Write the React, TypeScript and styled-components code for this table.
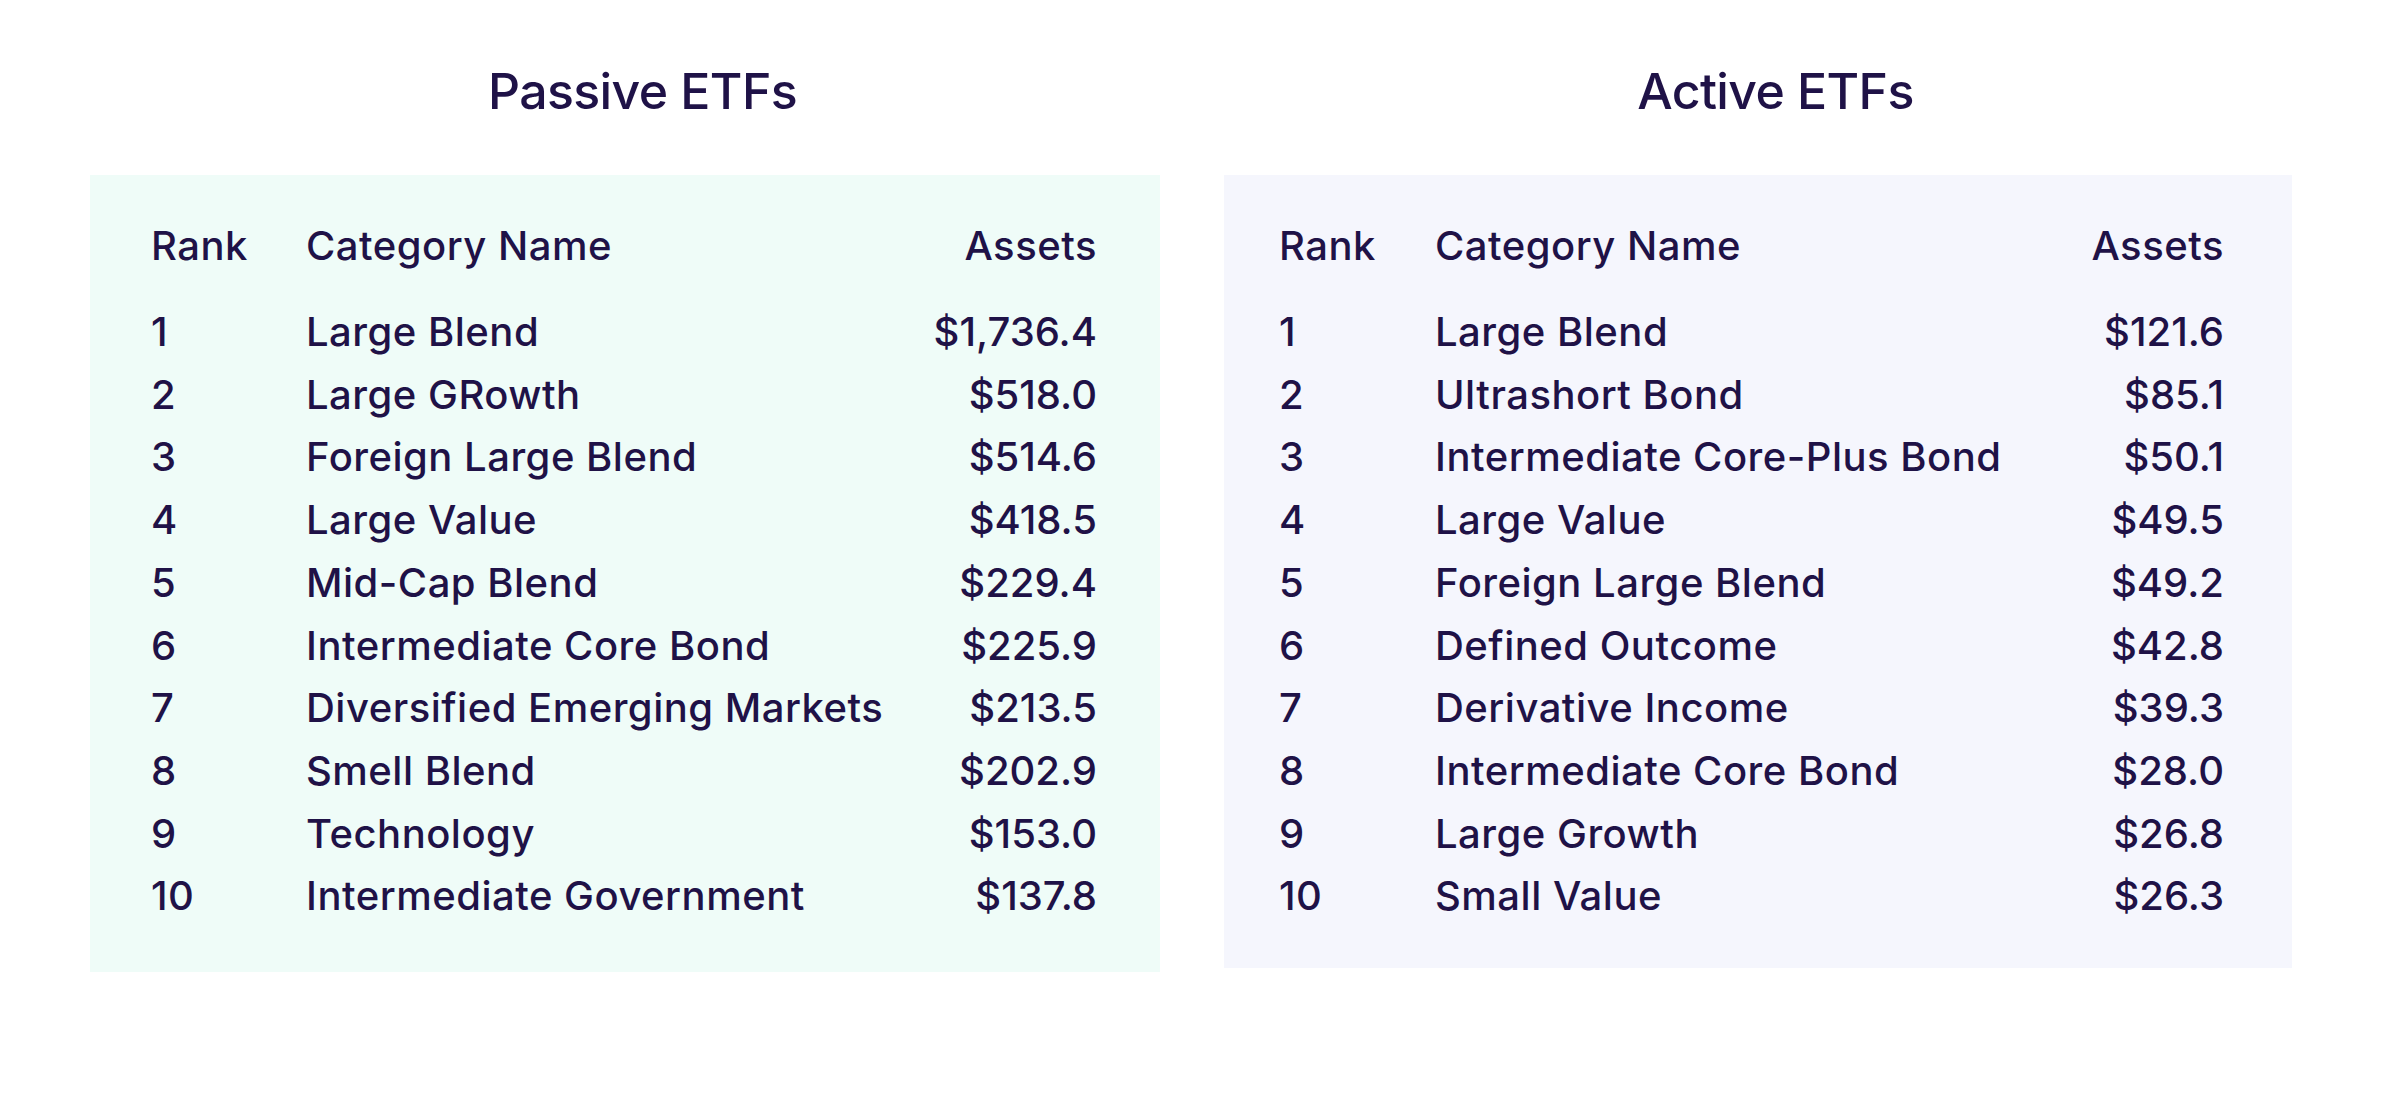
import React from "react";
import styled, { createGlobalStyle } from "styled-components";

type Row = { rank: number; name: string; assets: string };

const passive: Row[] = [
  { rank: 1, name: "Large Blend", assets: "$1,736.4" },
  { rank: 2, name: "Large GRowth", assets: "$518.0" },
  { rank: 3, name: "Foreign Large Blend", assets: "$514.6" },
  { rank: 4, name: "Large Value", assets: "$418.5" },
  { rank: 5, name: "Mid-Cap Blend", assets: "$229.4" },
  { rank: 6, name: "Intermediate Core Bond", assets: "$225.9" },
  { rank: 7, name: "Diversified Emerging Markets", assets: "$213.5" },
  { rank: 8, name: "Smell Blend", assets: "$202.9" },
  { rank: 9, name: "Technology", assets: "$153.0" },
  { rank: 10, name: "Intermediate Government", assets: "$137.8" },
];

const active: Row[] = [
  { rank: 1, name: "Large Blend", assets: "$121.6" },
  { rank: 2, name: "Ultrashort Bond", assets: "$85.1" },
  { rank: 3, name: "Intermediate Core-Plus Bond", assets: "$50.1" },
  { rank: 4, name: "Large Value", assets: "$49.5" },
  { rank: 5, name: "Foreign Large Blend", assets: "$49.2" },
  { rank: 6, name: "Defined Outcome", assets: "$42.8" },
  { rank: 7, name: "Derivative Income", assets: "$39.3" },
  { rank: 8, name: "Intermediate Core Bond", assets: "$28.0" },
  { rank: 9, name: "Large Growth", assets: "$26.8" },
  { rank: 10, name: "Small Value", assets: "$26.3" },
];

const GlobalStyle = createGlobalStyle`
  html, body {
    margin: 0;
    padding: 0;
    background: #ffffff;
  }
  body {
    font-family: Inter, "Noto Sans", "Liberation Sans", sans-serif;
    color: #1f1247;
  }
`;

const Page = styled.div`
  display: flex;
  gap: 64px;
  padding: 61px 0 0 90px;
  width: 2408px;
  height: 1110px;
  box-sizing: border-box;
`;

const Column = styled.section<{ $width: number }>`
  display: flex;
  flex-direction: column;
  width: ${(p) => p.$width}px;
`;

const Title = styled.h2`
  margin: 0 0 54px;
  padding-left: 35px;
  font-size: 50px;
  line-height: 60px;
  font-weight: 500;
  text-align: center;
  letter-spacing: -0.6px;
`;

const Panel = styled.div<{ $bg: string; $padL: number; $padR: number; $padB: number; $rankW: number }>`
  background: ${(p) => p.$bg};
  padding: 47px ${(p) => p.$padR}px ${(p) => p.$padB}px ${(p) => p.$padL}px;
  display: grid;
  grid-template-columns: ${(p) => p.$rankW}px 1fr auto;
  font-size: 40px;
  font-weight: 500;
  letter-spacing: 0.5px;
`;

const HeadCell = styled.div<{ $right?: boolean }>`
  line-height: 48px;
  margin-bottom: 31px;
  text-align: ${(p) => (p.$right ? "right" : "left")};
`;

const Cell = styled.div<{ $right?: boolean }>`
  line-height: 62.7px;
  white-space: nowrap;
  text-align: ${(p) => (p.$right ? "right" : "left")};
  letter-spacing: ${(p) => (p.$right ? "0" : "0.5px")};
`;

type TableProps = {
  title: string;
  rows: Row[];
  width: number;
  bg: string;
  padL: number;
  padR: number;
  padB: number;
  rankW: number;
};

const EtfTable = ({ title, rows, width, bg, padL, padR, padB, rankW }: TableProps) => (
  <Column $width={width}>
    <Title>{title}</Title>
    <Panel $bg={bg} $padL={padL} $padR={padR} $padB={padB} $rankW={rankW}>
      <HeadCell>Rank</HeadCell>
      <HeadCell>Category Name</HeadCell>
      <HeadCell $right>Assets</HeadCell>
      {rows.map((r) => (
        <React.Fragment key={r.rank}>
          <Cell>{r.rank}</Cell>
          <Cell>{r.name}</Cell>
          <Cell $right>{r.assets}</Cell>
        </React.Fragment>
      ))}
    </Panel>
  </Column>
);

export default function App() {
  return (
    <>
      <GlobalStyle />
      <Page>
        <EtfTable
          title="Passive ETFs"
          rows={passive}
          width={1070}
          bg="#effcf8"
          padL={61}
          padR={63}
          padB={44}
          rankW={155}
        />
        <EtfTable
          title="Active ETFs"
          rows={active}
          width={1068}
          bg="#f5f6fd"
          padL={55}
          padR={68}
          padB={40}
          rankW={156}
        />
      </Page>
    </>
  );
}
